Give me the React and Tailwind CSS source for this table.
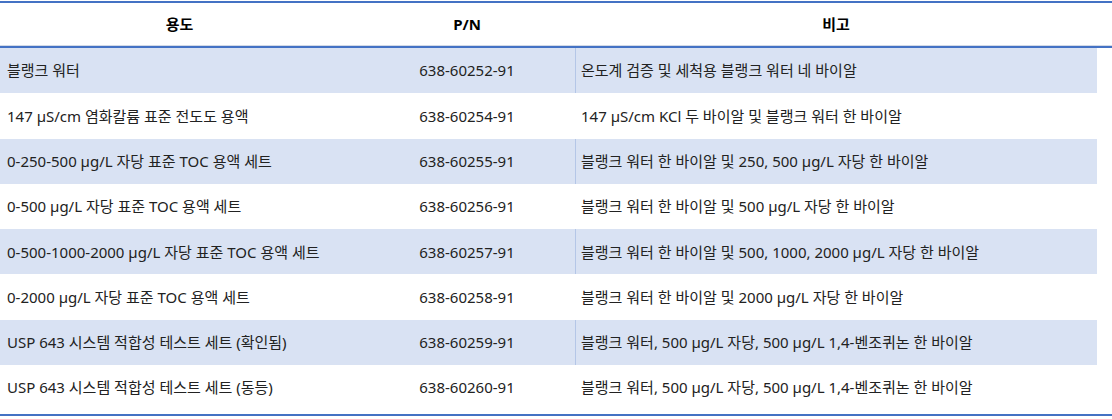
import React from 'react';

const rows = [
  ['블랭크 워터', '638-60252-91', '온도계 검증 및 세척용 블랭크 워터 네 바이알'],
  ['147 µS/cm 염화칼륨 표준 전도도 용액', '638-60254-91', '147 µS/cm KCl 두 바이알 및 블랭크 워터 한 바이알'],
  ['0-250-500 µg/L 자당 표준 TOC 용액 세트', '638-60255-91', '블랭크 워터 한 바이알 및 250, 500 µg/L 자당 한 바이알'],
  ['0-500 µg/L 자당 표준 TOC 용액 세트', '638-60256-91', '블랭크 워터 한 바이알 및 500 µg/L 자당 한 바이알'],
  ['0-500-1000-2000 µg/L 자당 표준 TOC 용액 세트', '638-60257-91', '블랭크 워터 한 바이알 및 500, 1000, 2000 µg/L 자당 한 바이알'],
  ['0-2000 µg/L 자당 표준 TOC 용액 세트', '638-60258-91', '블랭크 워터 한 바이알 및 2000 µg/L 자당 한 바이알'],
  ['USP 643 시스템 적합성 테스트 세트 (확인됨)', '638-60259-91', '블랭크 워터, 500 µg/L 자당, 500 µg/L 1,4-벤조퀴논 한 바이알'],
  ['USP 643 시스템 적합성 테스트 세트 (동등)', '638-60260-91', '블랭크 워터, 500 µg/L 자당, 500 µg/L 1,4-벤조퀴논 한 바이알'],
];

export default function App() {
  return (
    <div
      className="w-[1112px] h-[419px] bg-white text-[15px] text-[#222]"
      style={{ fontFamily: '"Noto Sans", "Noto Sans CJK KR", sans-serif' }}
    >
      <div className="mt-px border-t-2 border-[#4472c4]">
        <div className="grid grid-cols-[359px_216px_522px] h-[43px] items-center font-bold text-black border-b border-[#d3dae6]">
          <div className="text-center">용도</div>
          <div className="text-center">P/N</div>
          <div className="text-center">비고</div>
        </div>
        <div className="border-t-2 border-[#4472c4]" />
        <div className="border-b-2 border-[#4472c4]">
          {rows.map((r, i) => {
            const shaded = i % 2 === 0;
            const last = i === rows.length - 1;
            return (
              <div
                key={i}
                className={`grid grid-cols-[359px_216px_522px] w-[1097px] ${last ? 'h-[49px] pb-[4px]' : 'h-[45.3px]'} ${shaded ? 'bg-[#d9e2f3]' : 'bg-white'}`}
              >
                <div className="flex items-center pl-[7px] whitespace-nowrap">{r[0]}</div>
                <div className="flex items-center justify-center">{r[1]}</div>
                <div className={`flex items-center pl-[5px] whitespace-nowrap border-l ${shaded ? 'border-[#b4c6e7]' : 'border-white'}`}>{r[2]}</div>
              </div>
            );
          })}
        </div>
      </div>
    </div>
  );
}
